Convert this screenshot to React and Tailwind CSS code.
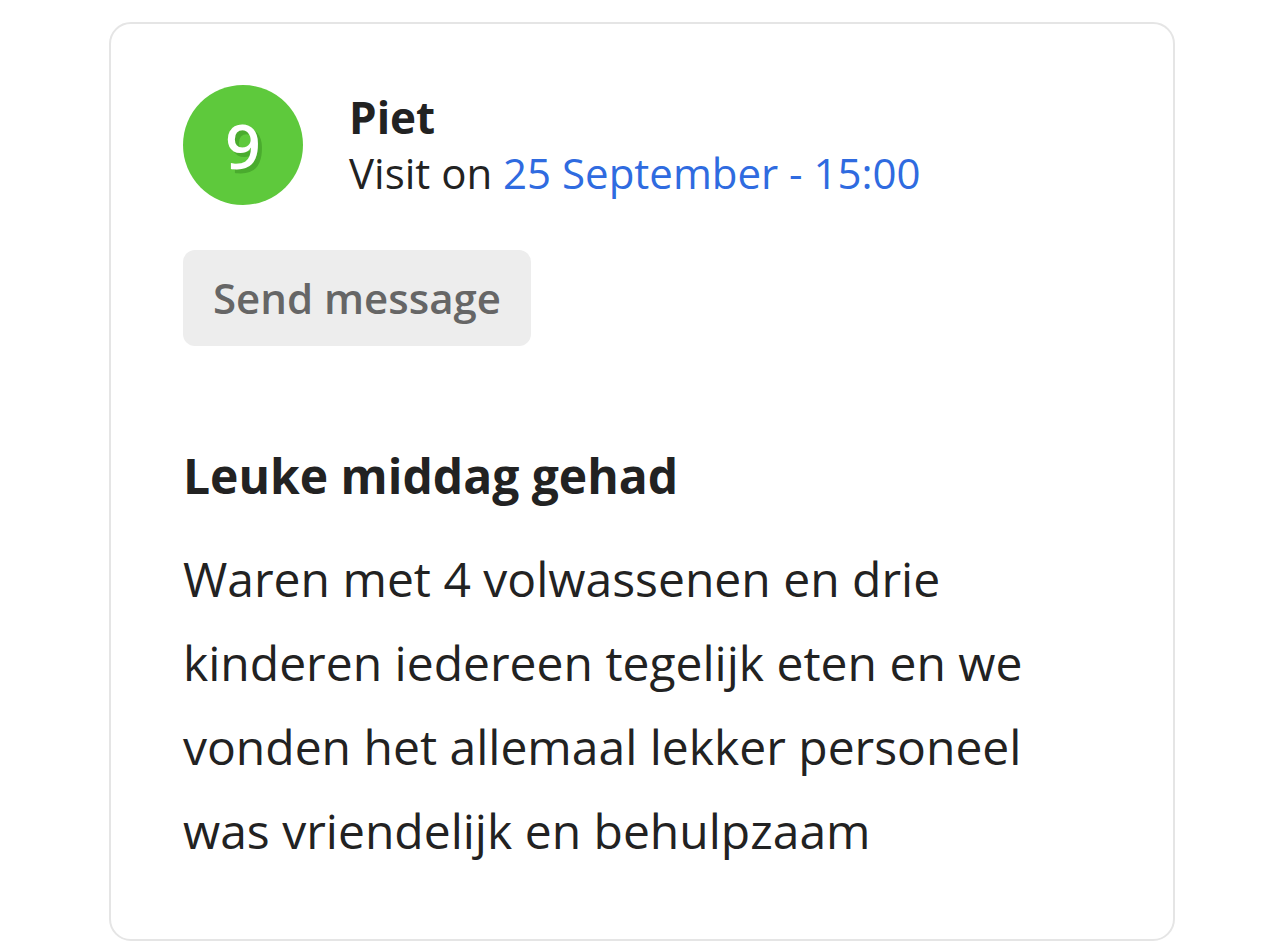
export default function App() {
  return (
    <div className="min-h-screen bg-white pl-[109px] pr-[91px] pt-[22px] font-['Open_Sans',sans-serif]">
      <div className="rounded-[22px] border-2 border-[#e5e5e5] px-[72px] pt-[61px] pb-[66px] text-[#222]">
        <div className="flex items-center gap-[46px]">
          <div className="flex h-[120px] w-[120px] shrink-0 items-center justify-center rounded-full bg-[#5ec93c]">
            <span className="text-[62px] font-semibold leading-none text-white [text-shadow:4px_4px_0_#4aab2e]">9</span>
          </div>
          <div className="flex flex-col">
            <span className="text-[44px] font-bold leading-[55px]">Piet</span>
            <span className="text-[42px] leading-[55px]">
              Visit on <span className="text-[#2f6be0]">25 September - 15:00</span>
            </span>
          </div>
        </div>
        <button className="mt-[45px] rounded-[12px] bg-[#ededed] px-[30px] py-[18px] text-[42px] font-semibold leading-[60px] text-[#666]">
          Send message
        </button>
        <h2 className="mt-[100px] text-[48px] font-bold leading-[60px]">Leuke middag gehad</h2>
        <p className="mt-[31px] text-[48px] leading-[84px]">
          Waren met 4 volwassenen en drie kinderen iedereen tegelijk eten en we vonden het allemaal lekker personeel was vriendelijk en behulpzaam
        </p>
      </div>
    </div>
  );
}
